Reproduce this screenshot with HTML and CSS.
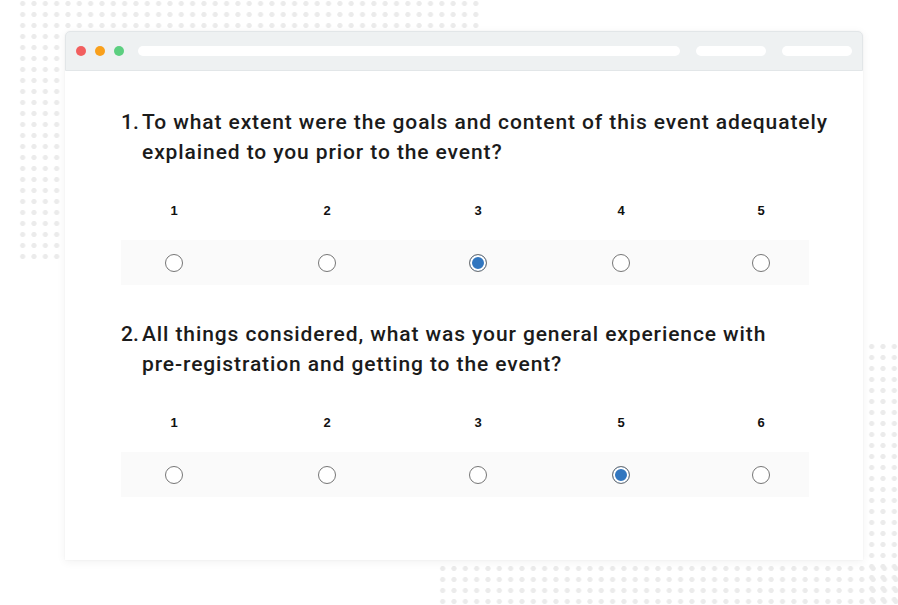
FILE: index.html
```html
<!DOCTYPE html>
<html>
<head>
<meta charset="utf-8">
<link rel="stylesheet" href="styles.css">
</head>
<body>
<div class="dots dots-tl"></div>
<div class="dots dots-r"></div>
<div class="dots dots-b"></div>
<div class="window">
  <div class="titlebar">
    <span class="light red"></span>
    <span class="light orange"></span>
    <span class="light green"></span>
    <span class="bar bar-url"></span>
    <span class="bar bar-s"></span>
    <span class="bar bar-s"></span>
  </div>
  <div class="content">
    <div class="question">
      <h2 class="qtitle"><span class="qnum">1.</span><span class="qtext">To what extent were the goals and content of this event adequately explained to you prior to the event?</span></h2>
      <div class="scale labels">
        <span>1</span><span>2</span><span>3</span><span>4</span><span>5</span>
      </div>
      <div class="scale radios">
        <span class="radio"></span><span class="radio"></span><span class="radio on"></span><span class="radio"></span><span class="radio"></span>
      </div>
    </div>
    <div class="question q2">
      <h2 class="qtitle"><span class="qnum">2.</span><span class="qtext">All things considered, what was your general experience with <span class="nowrap">pre-registration</span> and getting to the event?</span></h2>
      <div class="scale labels">
        <span>1</span><span>2</span><span>3</span><span>5</span><span>6</span>
      </div>
      <div class="scale radios">
        <span class="radio"></span><span class="radio"></span><span class="radio"></span><span class="radio on"></span><span class="radio"></span>
      </div>
    </div>
  </div>
</div>
</body>
</html>
```
FILE: styles.css
```css
html, body {
  margin: 0;
  background: #ffffff;
}
body {
  position: relative;
  width: 898px;
  height: 605px;
  overflow: hidden;
  padding: 31px 0 0 65px;
  box-sizing: border-box;
  font-family: Roboto, "Liberation Sans", sans-serif;
}
.dots {
  position: absolute;
  background-image: radial-gradient(circle at center, #ebebeb 0, #ebebeb 2.2px, rgba(235,235,235,0) 2.9px);
  background-size: 11.33px 11px;
  z-index: 0;
}
.dots-tl {
  left: 17px;
  top: -2px;
  width: 465px;
  height: 266px;
}
.dots-r {
  left: 866px;
  top: 341px;
  width: 32px;
  height: 264px;
}
.dots-b {
  left: 437px;
  top: 563px;
  width: 461px;
  height: 42px;
}
.window {
  position: relative;
  z-index: 1;
  width: 798px;
  height: 529px;
  background: #ffffff;
  border-radius: 5px 5px 0 0;
  box-shadow: 0 2px 10px rgba(0,0,0,0.06), 0 0 2px rgba(0,0,0,0.05);
}
.titlebar {
  height: 38px;
  background: #eef1f2;
  border: 1px solid #e2e6e8;
  border-radius: 5px 5px 0 0;
  display: flex;
  align-items: center;
  padding-left: 10px;
  box-sizing: content-box;
}
.light {
  width: 10px;
  height: 10px;
  border-radius: 50%;
  margin-right: 9px;
}
.red { background: #f25f5f; }
.orange { background: #f9a01c; }
.green { background: #5ccf80; }
.bar {
  height: 10px;
  background: #ffffff;
  border-radius: 5px;
}
.bar-url {
  width: 542px;
  margin-left: 5px;
}
.bar-s {
  width: 70px;
  margin-left: 16px;
}
.content {
  padding: 36px 0 0 56px;
}
.qtitle {
  margin: 0;
  display: flex;
  font-size: 21px;
  line-height: 30px;
  font-weight: 500;
  letter-spacing: 0.9px;
  color: #1b1b1b;
  width: 716px;
}
.qnum {
  width: 21px;
  flex: none;
  letter-spacing: 0;
}
.qtext {
  flex: 1;
}
.nowrap {
  white-space: nowrap;
}
.scale {
  display: grid;
  grid-template-columns: 106px 200px 102px 184px 96px;
  width: 688px;
  justify-items: center;
  align-items: center;
}
.labels {
  margin-top: 32px;
  height: 22px;
  font-family: "Liberation Sans", Arial, sans-serif;
  font-weight: bold;
  font-size: 13px;
  color: #111;
}
.radios {
  margin-top: 19px;
  height: 45px;
  background: #fafafa;
}
.radio {
  width: 16px;
  height: 16px;
  border: 1px solid #767676;
  border-radius: 50%;
  background: #ffffff;
  box-sizing: content-box;
}
.radio.on {
  background: #3176bf;
  box-shadow: inset 0 0 0 2px #ffffff;
}
.q2 {
  margin-top: 34px;
}
```
